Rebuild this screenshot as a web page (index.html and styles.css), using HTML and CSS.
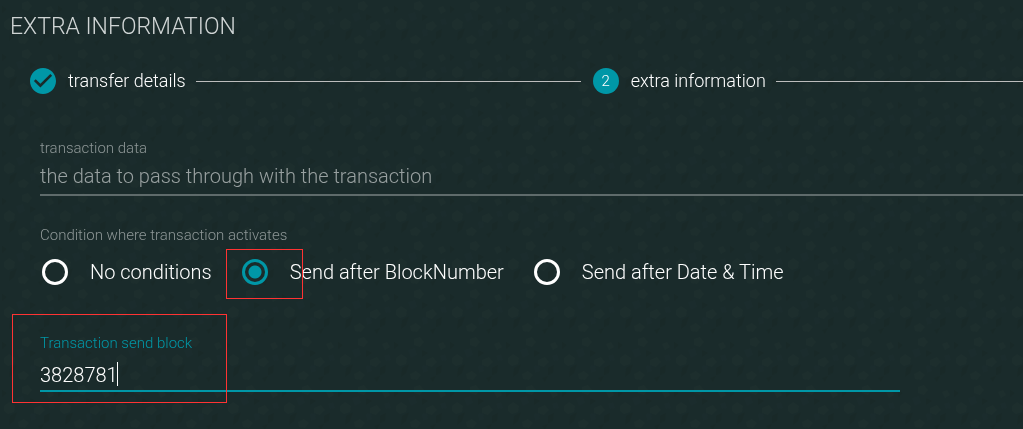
FILE: index.html
```html
<!DOCTYPE html>
<html lang="en">
<head>
	<meta charset="UTF-8">
	<meta name="viewport" content="width=device-width, initial-scale=1.0">
	<title>Extra information</title>
	<link rel="stylesheet" href="styles.css">
</head>
<body>
	<!-- Background texture -->
	<svg class="texture" width="100%" height="100%" aria-hidden="true">
		<defs>
			<pattern id="facets" width="56" height="48" patternUnits="userSpaceOnUse">
				<path fill="#1d2e2d" d="M4 22l5-4 6 4-1 6-6 2-4-3zM22 3l6-2 4 5-4 5-6-2zM34 24l7-3 4 5-5 5-6-2zM46 8l5-2 3 5-5 3zM18 38l6-3 5 4-4 5-6-1z"/>
				<path fill="#192928" d="M10 32l7-4-3 9-5 4zM30 14l6 3-6 4zM44 32l6-3-1 8-5 2zM2 6l5 3-5 4zM38 42l6-2-3 6z"/>
				<path fill="#1b2c2d" d="M16 14l7-2 2 7-6 3zM30 30l5-1 1 6-5 2zM48 20l5-2 2 6-5 1z"/>
			</pattern>
		</defs>
		<rect width="100%" height="100%" fill="url(#facets)"/>
	</svg>

	<main class="dialog">
		<h1 class="title">EXTRA INFORMATION</h1>

		<!-- Steps -->
		<ol class="stepper">
			<li class="step">
				<svg class="step-icon" viewBox="2 2 20 20" aria-hidden="true">
					<path fill="#0097a7" d="M12 2C6.48 2 2 6.48 2 12s4.48 10 10 10 10-4.48 10-10S17.52 2 12 2zm-2 15l-5-5 1.41-1.41L10 14.17l7.59-7.59L19 8l-9 9z"/>
				</svg>
				<span class="step-label">transfer details</span>
				<span class="step-line"></span>
			</li>
			<li class="step">
				<span class="step-icon step-number">2</span>
				<span class="step-label">extra information</span>
				<span class="step-line"></span>
			</li>
		</ol>

		<form class="form">
			<div class="field field-wide">
				<label class="field-label" for="data">transaction data</label>
				<input class="field-input" type="text" id="data" placeholder="the data to pass through with the transaction">
			</div>

			<fieldset class="conditions">
				<legend class="field-label">Condition where transaction activates</legend>
				<div class="options">
					<label class="option"><input class="radio" type="radio" name="condition">No conditions</label>
					<label class="option"><input class="radio" type="radio" name="condition" checked>Send after BlockNumber<span class="mark mark-radio"></span></label>
					<label class="option"><input class="radio" type="radio" name="condition">Send after Date &amp; Time</label>
				</div>
			</fieldset>

			<div class="field field-active">
				<label class="field-label" for="block">Transaction send block</label>
				<input class="field-input" type="text" id="block" value="3828781">
				<span class="caret"></span>
				<span class="mark mark-block"></span>
			</div>
		</form>
	</main>
</body>
</html>
```

FILE: styles.css
```css
* {
	box-sizing: border-box;
}
body {
	margin: 0;
	background-color: #1a2b2b;
	color: #fff;
	font-family: Roboto, sans-serif;
	font-weight: 300;
}
.texture {
	position: fixed;
	top: 0;
	left: 0;
	z-index: -1;
}
.dialog {
	padding: 13px 0 24px 10px;
}
.title {
	margin: 0;
	color: #d0d5d5;
	font-size: 23px;
	font-weight: 300;
	line-height: 28px;
}

/* Steps */
.stepper {
	display: grid;
	grid-template-columns: 17fr 13fr;
	list-style: none;
	margin: 27px 0 0;
	padding: 0 0 0 20px;
}
.step {
	display: flex;
	align-items: center;
	font-size: 18px;
	line-height: 26px;
}
.step-icon {
	flex: none;
	width: 26px;
	height: 26px;
}
.step-number {
	border-radius: 50%;
	background-color: #0097a7;
	font-size: 15px;
	text-align: center;
}
.step-label {
	margin: 0 10px 0 12px;
}
.step-line {
	flex: 1;
	margin-right: 12px;
	border-top: 1px solid #bdbdbd;
}
.step:last-child .step-line {
	margin-right: 0;
}

/* Form */
.form {
	padding: 44px 0 0 30px;
}
.field {
	position: relative;
	width: 87.5%;
}
.field-wide {
	width: 100%;
}
.field-label {
	display: block;
	padding: 0;
	color: #8d9696;
	font-size: 15px;
	line-height: 20px;
}
.field-input {
	display: block;
	width: 100%;
	height: 38px;
	padding: 0;
	border: 0;
	border-bottom: 2px solid #5f6b6b;
	outline: none;
	background: none;
	color: #fff;
	font: inherit;
	font-size: 20px;
}
.field-input::placeholder {
	color: #98a0a0;
	opacity: 1;
}
.field-active .field-label {
	color: #0097a7;
}
.field-active .field-input {
	height: 39px;
	padding-top: 6px;
	border-color: #0097a7;
}
.caret {
	position: absolute;
	top: 29px;
	left: 77px;
	width: 1px;
	height: 24px;
	background-color: #fff;
}

/* Radio buttons */
.conditions {
	margin: 29px 0 48px;
	padding: 0;
	border: 0;
}
.options {
	display: flex;
	gap: 30px;
	padding: 14px 0 0 2px;
}
.option {
	position: relative;
	display: flex;
	align-items: center;
	gap: 22px;
	font-size: 20px;
	line-height: 26px;
	white-space: nowrap;
}
.radio {
	appearance: none;
	width: 26px;
	height: 26px;
	margin: 0;
	border: 3px solid #fff;
	border-radius: 50%;
}
.radio:checked {
	border-color: #0097a7;
	background: radial-gradient(circle, #0097a7 6px, transparent 7px);
}

/* Red highlight boxes */
.mark {
	position: absolute;
	border: 1px solid #f33;
	pointer-events: none;
}
.mark-radio {
	top: -10px;
	left: -16px;
	width: 77px;
	height: 50px;
}
.mark-block {
	top: -19px;
	left: -28px;
	width: 215px;
	height: 89px;
}
```
